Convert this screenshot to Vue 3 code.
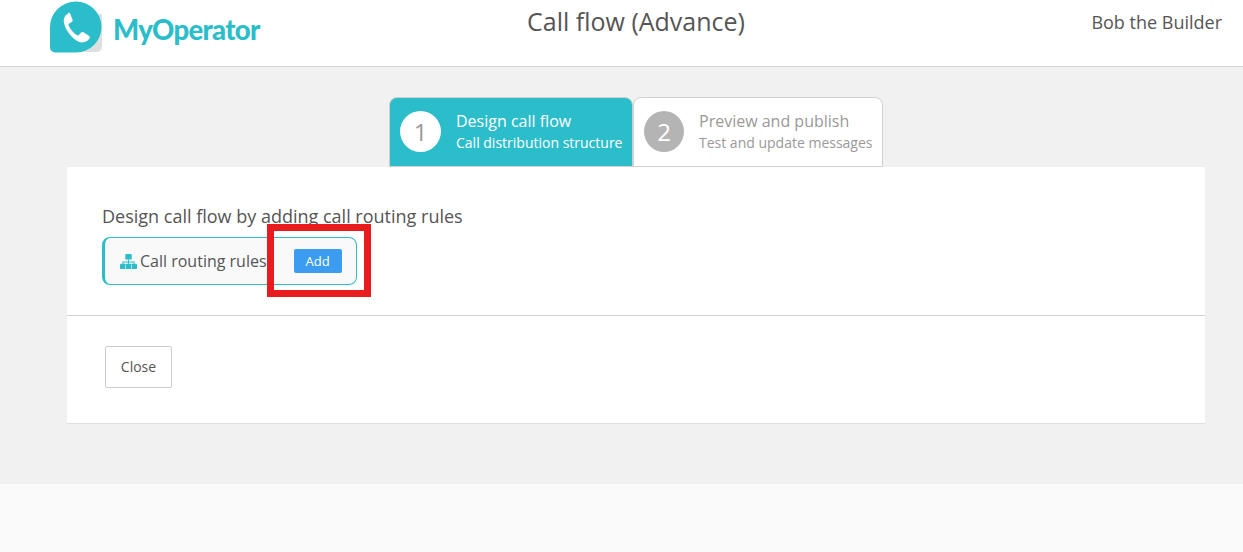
<script setup>
const steps = [
  { num: 1, title: 'Design call flow', sub: 'Call distribution structure', active: true },
  { num: 2, title: 'Preview and publish', sub: 'Test and update messages', active: false },
]
</script>

<template>
  <div class="page">
    <header class="topbar">
      <div class="logo">
        <svg class="logo-mark" width="54" height="54" viewBox="0 0 54 54">
          <path d="M12 14h40v33a5 5 0 0 1-5 5H12z" fill="#dfdfdf" />
          <path d="M26 1.500a25.500 25.500 0 0 1 0 51H5a5 5 0 0 1-5-5V27A26 25.500 0 0 1 26 1.500z" fill="#2cbdcb" />
          <path
            transform="translate(-7.500 -7.800) scale(1.320)"
            d="M19.500 16.200c-1.300.8-4 2.600-3.300 6.800.9 4.800 4.200 9.300 7.900 12.400 3 2.400 5.600 3.100 7.600 2.400 1.800-.6 3.500-1.900 4-3 .4-.8.100-1.400-.6-1.900l-4-2.500c-.8-.5-1.400-.3-2 .3l-1.600 1.700c-.5.500-1 .5-1.600.1-2.500-1.700-4.700-4.400-6-7.100-.3-.7-.2-1.200.4-1.600l1.800-1.200c.7-.5.900-1.100.6-1.900l-1.700-4.300c-.3-.9-.9-1.100-1.500-.7z"
            fill="#fff"
          />
        </svg>
        <span class="logo-text">MyOperator</span>
      </div>
      <h1 class="page-title">Call flow (Advance)</h1>
      <div class="user">Bob the Builder</div>
    </header>

    <main class="content">
      <div class="steps">
        <div v-for="step in steps" :key="step.num" class="step" :class="{ active: step.active }">
          <span class="step-num">{{ step.num }}</span>
          <div class="step-text">
            <div class="step-title">{{ step.title }}</div>
            <div class="step-sub">{{ step.sub }}</div>
          </div>
        </div>
      </div>

      <section class="panel">
        <div class="panel-body">
          <p class="intro">Design call flow by adding call routing rules</p>
          <div class="rule-box">
            <svg class="rule-icon" width="17" height="15" viewBox="0 0 16 14">
              <rect x="5" y="0" width="6" height="5" rx="0.600" fill="#2cbdcb" />
              <path d="M8 5v4M2.800 9V7.500h10.400V9" stroke="#2cbdcb" fill="none" />
              <rect x="0" y="9" width="5" height="5" rx="0.600" fill="#2cbdcb" />
              <rect x="5.500" y="9" width="5" height="5" rx="0.600" fill="#2cbdcb" />
              <rect x="11" y="9" width="5" height="5" rx="0.600" fill="#2cbdcb" />
            </svg>
            <span class="rule-label">Call routing rules</span>
            <button class="add-btn">Add</button>
          </div>
          <div class="highlight"></div>
        </div>
        <div class="panel-foot">
          <button class="close-btn">Close</button>
        </div>
      </section>
    </main>
  </div>
</template>

<style>
html,
body {
  margin: 0;
  background: #fafafa;
}
</style>

<style scoped>
.page {
  font-family: 'Open Sans', 'Liberation Sans', sans-serif;
  color: #555;
  height: 552px;
  overflow: hidden;
  background: #fafafa;
}

.topbar {
  height: 66px;
  background: #fff;
  border-bottom: 1px solid #d4d4d4;
  display: flex;
  align-items: flex-start;
  justify-content: space-between;
  padding: 0 21px 0 50px;
  position: relative;
}

.logo {
  display: flex;
  align-items: center;
  height: 54px;
}

.logo-text {
  margin-left: 9px;
  font-family: 'Lato', sans-serif;
  font-size: 27.500px;
  font-weight: 900;
  letter-spacing: -0.700px;
  color: #2cbdcb;
  line-height: 54px;
  padding-top: 6px;
}

.page-title {
  position: absolute;
  left: 67px;
  right: 38px;
  top: 4px;
  margin: 0;
  text-align: center;
  font-size: 25px;
  font-weight: 400;
  line-height: 34px;
  color: #555;
}

.user {
  font-size: 18px;
  line-height: 24px;
  margin-top: 10px;
}

.content {
  background: #f1f1f1;
  height: 417px;
  padding: 30px 38px 0 67px;
  box-sizing: border-box;
}

.steps {
  display: flex;
  justify-content: center;
  height: 70px;
}

.step {
  height: 70px;
  box-sizing: border-box;
  border: 1px solid #d0d0d0;
  border-radius: 8px 8px 0 0;
  background: #fff;
  display: flex;
  align-items: center;
  padding: 0 0 2px 10px;
  width: 250px;
  color: #999;
}

.step.active {
  background: #2cbdcb;
  color: #fff;
  width: 244px;
}

.step-num {
  width: 40px;
  height: 41px;
  border-radius: 50%;
  background: #b4b4b4;
  color: #fff;
  font-size: 24px;
  display: flex;
  align-items: center;
  justify-content: center;
  flex-shrink: 0;
}

.step.active .step-num {
  width: 41px;
  background: #fff;
  color: #999;
}

.step-text {
  margin-left: 15px;
  white-space: nowrap;
}

.step-title {
  font-size: 16px;
  line-height: 22px;
}

.step-sub {
  font-size: 14px;
  line-height: 21px;
}

.panel {
  background: #fff;
  border-bottom: 1px solid #e0e0e0;
  box-sizing: border-box;
  height: 257px;
}

.panel-body {
  height: 149px;
  padding: 37px 0 0 35px;
  box-sizing: border-box;
  border-bottom: 1px solid #d4d4d4;
  position: relative;
}

.intro {
  margin: 0;
  font-size: 18px;
  line-height: 24px;
  color: #555;
}

.rule-box {
  margin-top: 9px;
  width: 255px;
  height: 48px;
  box-sizing: border-box;
  background: #f9f9f9;
  border: 1px solid #2cbdcb;
  border-left-width: 3px;
  border-radius: 8px;
  display: flex;
  align-items: center;
  padding-left: 15px;
}

.rule-label {
  font-size: 16px;
  margin-left: 3px;
  white-space: nowrap;
}

.add-btn {
  margin-left: 27px;
  width: 48px;
  height: 24px;
  padding: 0;
  border: none;
  border-radius: 2px;
  background: #3b9cf0;
  color: #fff;
  font-family: inherit;
  font-size: 13px;
}

/* annotation drawn over the screenshot */
.highlight {
  position: absolute;
  left: 200px;
  top: 57px;
  width: 104px;
  height: 73px;
  box-sizing: border-box;
  border: 7px solid #e81c1f;
}

.panel-foot {
  padding: 30px 0 0 38px;
}

.close-btn {
  width: 67px;
  height: 42px;
  padding: 0 0 2px;
  background: #fff;
  border: 1px solid #ccc;
  border-radius: 2px;
  color: #555;
  font-family: inherit;
  font-size: 14px;
}
</style>
